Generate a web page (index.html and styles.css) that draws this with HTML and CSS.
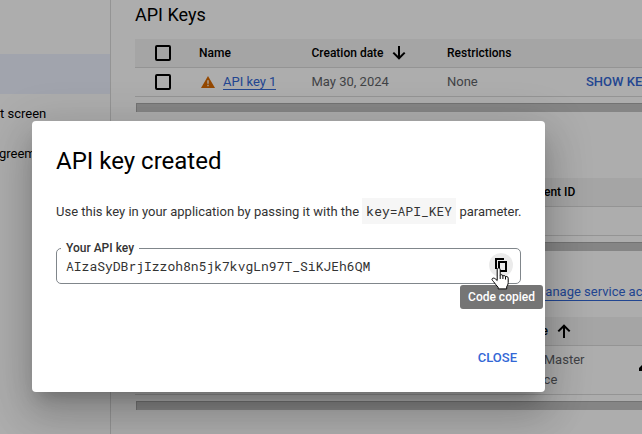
FILE: index.html
```html
<!DOCTYPE html>
<html lang="en">
<head>
<meta charset="utf-8">
<title>API Keys</title>
<link rel="stylesheet" href="styles.css">
</head>
<body>
<div class="app">
  <nav class="sidebar">
    <div class="nav-item selected"></div>
    <div class="nav-item">t screen</div>
    <div class="nav-item agreements">greements</div>
  </nav>
  <main class="content">
    <h2 class="title">API Keys</h2>
    <section class="table keys">
      <div class="row head">
        <span class="box"></span><span>Name</span>
        <span class="sort">Creation date
          <svg class="arrow" viewBox="0 0 14 14"><path d="M7 0v12M1.300 6.600 7 12.300l5.700-5.700"/></svg>
        </span>
        <span>Restrictions</span><span></span>
      </div>
      <div class="row">
        <span class="box"></span>
        <span class="name"><svg class="warn" viewBox="0 0 14 12"><path class="tri" d="M7 0 14 12H0z"/><path class="mark" d="M7 4.200v3.600M7 8.800v1.400"/></svg><a class="link">API key 1</a></span>
        <span>May 30, 2024</span><span>None</span><span class="show">SHOW KEY</span>
      </div>
    </section>
    <div class="scroll"></div>
    <section class="table clients">
      <div class="row head"><span></span><span>Client ID</span></div>
      <div class="row"></div>
    </section>
    <div class="scroll"></div>
    <div class="manage"><a class="link">Manage service accounts</a></div>
    <section class="table accounts">
      <div class="row head"><span></span><span class="sort">Name
        <svg class="arrow" viewBox="0 0 14 14"><path d="M7 14V2M1.300 7.400 7 1.700l5.700 5.700"/></svg></span></div>
      <div class="row tall"><span></span><span>Web Master<br>Service</span>
        <svg class="edit" viewBox="0 0 12 12"><path d="M0 12V9l8-8 3 3-8 8z"/></svg></div>
    </section>
    <div class="scroll"></div>
  </main>
</div>
<div class="backdrop">
  <div class="dialog">
    <h1>API key created</h1>
    <p>Use this key in your application by passing it with the <code>key=API_KEY</code> parameter.</p>
    <fieldset>
      <legend>Your API key</legend>
      <span class="value">AIzaSyDBrjIzzoh8n5jk7kvgLn97T_SiKJEh6QM</span>
      <span class="copy">
        <svg viewBox="0 0 16 16"><path d="M3 12V2h8M6 5h7v9H6z"/></svg>
      </span>
    </fieldset>
    <button class="close">CLOSE</button>
    <div class="tooltip">Code copied</div>
    <svg class="cursor" viewBox="0 0 18 23"><path d="M6.200 13.500V2.800c0-2.400 3-2.400 3 0v5.700c.3-1.200 2.700-1 2.700.6.600-1 2.600-.7 2.600.8.700-.8 2.700-.4 2.700 1.300v4.300c0 2-1 3.200-1.500 4.200v2.200H7.200v-1.500C5.500 18.600 4 16.600 2.500 14.600c-.7-1-1.900-1.700-1.400-2.700.6-1.300 2.400-.9 3.500.2z"/><path d="M9.200 8.500v3.500M11.900 9v3M14.500 10v2.500"/></svg>
  </div>
</div>
</body>
</html>
```
FILE: styles.css
```css
* { box-sizing: border-box; }
body {
  margin: 0;
  height: 434px;
  overflow: hidden;
  font: 13px/20px Roboto, sans-serif;
  color: #000;
}
.app { display: flex; height: 434px; background: #fff; overflow: hidden; }
.sidebar { flex: 0 0 111px; padding-top: 54px; border-right: 1px solid #dadada; }
.nav-item {
  display: flex;
  align-items: center;
  width: 110px;
  height: 40px;
  white-space: nowrap;
}
.nav-item.selected { background: #eef2ff; }
.nav-item.agreements { margin-left: -1px; }
.content { flex: 1; min-width: 0; padding-left: 24px; }
.title { margin: 0; height: 39px; padding-top: 3px; font-size: 18px; line-height: 24px; font-weight: 400; }
.row {
  display: grid;
  align-items: center;
  height: 29px;
  border-bottom: 1px solid #dadada;
  color: #5f6368;
  white-space: nowrap;
}
.head { background: #f3f3f3; color: #000; font-weight: 500; font-size: 12px; }
.keys .row { grid-template-columns: 64px 112.500px 135.500px 139px 1fr; }
.clients .row { grid-template-columns: 395px 1fr; }
.accounts .row { grid-template-columns: 381px 1fr; }
.box { width: 16px; height: 16px; margin-left: 20px; border: 2px solid #000; border-radius: 2px; }
.sort { display: flex; align-items: center; gap: 9px; }
.arrow { width: 14px; height: 14px; margin-left: -1px; fill: none; stroke: #000; stroke-width: 2; }
.accounts .arrow { margin-left: 0; }
.name { display: flex; align-items: center; padding-left: 2px; gap: 8px; }
.warn { width: 14px; height: 12px; }
.tri { fill: #db6b00; }
.mark { stroke: #fff; stroke-width: 1.3; }
.link { color: #3367d6; line-height: 15px; border-bottom: 1px solid #3367d6; }
.show { color: #3367d6; font-weight: 500; }
.scroll { height: 9px; margin: 6px 0 0 1px; background: #c4c4c4; border: 1px solid #aaa; border-width: 1px 0 0 1px; }
.clients { margin-top: 66px; }
.manage { display: flex; align-items: flex-end; height: 50px; padding-left: 399px; white-space: nowrap; }
.manage .link { line-height: 17px; }
.accounts { margin-top: 16px; }
.accounts .tall { position: relative; height: 49px; grid-template-columns: 380px 1fr; }
.edit { position: absolute; left: 504px; top: 13px; width: 12px; height: 12px; }
.backdrop {
  position: absolute;
  inset: 0;
  padding: 121px 0 0 32px;
  overflow: hidden;
  background: rgba(0, 0, 0, .32);
}
.dialog {
  position: relative;
  display: flex;
  flex-direction: column;
  width: 513px;
  height: 271px;
  padding: 24px;
  border-radius: 4px;
  background: #fff;
  box-shadow: 0 11px 15px -7px rgba(0,0,0,.2), 0 24px 38px 3px rgba(0,0,0,.14), 0 9px 46px 8px rgba(0,0,0,.12);
}
h1 { margin: 0; font-size: 24px; line-height: 32px; font-weight: 400; }
p { margin: 21px 0 0; line-height: 26px; white-space: nowrap; color: #333; }
code, .value { font: 13px/20px "Roboto Mono", "DejaVu Sans Mono", monospace; color: #333; }
code { display: inline-block; padding: 3px 4px; line-height: 20px; background: #f6f6f6; }
fieldset {
  display: flex;
  align-items: flex-start;
  justify-content: space-between;
  width: 465px;
  height: 43px;
  margin: 16px 0 0;
  padding: 0 7px 0 9px;
  border: 1px solid #80868b;
  border-radius: 5px;
}
legend { margin-left: -5px; padding: 0 5px; font-size: 12px; line-height: 14px; font-weight: 500; color: #333; }
.value { margin-top: 1px; }
.copy { display: flex; align-items: center; justify-content: center; width: 24px; height: 24px; margin-top: -2px; border-radius: 50%; background: #ebebeb; }
.copy svg { width: 16px; height: 16px; fill: none; stroke: #000; stroke-width: 2; }
.close { margin: auto 4px 0 auto; padding: 0; border: 0; background: none; color: #3367d6; font: 500 13px/20px Roboto, sans-serif; }
.tooltip {
  position: absolute;
  left: 428px;
  top: 164px;
  width: 83px;
  height: 24px;
  border-radius: 3px;
  background: #757575;
  color: #fff;
  font-size: 12px;
  font-weight: 500;
  line-height: 24px;
  text-align: center;
}
.cursor { position: absolute; left: 459px; top: 146px; width: 18px; height: 23px; fill: #fff; stroke: #000; stroke-width: 1; }
```
